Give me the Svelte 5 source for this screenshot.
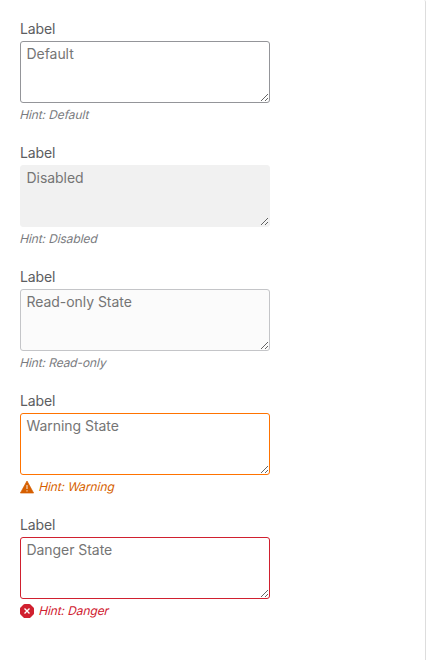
<script>
  const fields = [
    { kind: 'default', text: 'Default', hint: 'Default' },
    { kind: 'disabled', text: 'Disabled', hint: 'Disabled' },
    { kind: 'readonly', text: 'Read-only State', hint: 'Read-only' },
    { kind: 'warning', text: 'Warning State', hint: 'Warning' },
    { kind: 'danger', text: 'Danger State', hint: 'Danger' }
  ];
</script>

<main>
  {#each fields as f}
    <div class="field {f.kind}">
      <label for={f.kind}>Label</label>
      <textarea id={f.kind} placeholder={f.text} disabled={f.kind === 'disabled'} readonly={f.kind === 'readonly'}></textarea>
      <div class="hint">
        {#if f.kind === 'warning'}
          <svg width="14" height="14" viewBox="0 0 14 14"><path d="M7 1 13.6 13H.4Z" fill="currentColor" stroke="currentColor" stroke-width=".7" stroke-linejoin="round"/><path d="M7 5v4.1M7 10.2v1.3" stroke="#fff" stroke-opacity=".8" stroke-width="1.1"/></svg>
        {:else if f.kind === 'danger'}
          <svg width="14" height="14" viewBox="0 0 14 14"><path d="M4.7 0h4.6Q10 0 10.5.5l3 3q.5.5.5 1.2v4.6q0 .7-.5 1.2l-3 3q-.5.5-1.2.5H4.7q-.7 0-1.2-.5l-3-3Q0 10 0 9.3V4.7Q0 4 .5 3.5l3-3Q4 0 4.7 0Z" fill="currentColor"/><path d="m4.5 4.5 5 5M9.5 4.5l-5 5" stroke="#fff" stroke-width="1.4"/></svg>
        {/if}
        <span>Hint: {f.hint}</span>
      </div>
    </div>
  {/each}
</main>

<style>
  main {
    box-sizing: border-box;
    height: 660px;
    padding: 17px 20px 0;
    border-right: 1px solid #ddd;
    border-top-right-radius: 2px;
    background: #fff;
    font-family: Inter, sans-serif;
  }
  .field { height: 124px; width: 250px; }
  label { display: block; height: 24px; line-height: 24px; font-size: 14px; letter-spacing: -0.1px; color: #5c5d61; }
  textarea {
    display: block;
    box-sizing: border-box;
    width: 250px;
    height: 62px;
    margin: 0;
    padding: 0 5.5px;
    border: 1px solid #949599;
    border-radius: 3px;
    background: #fff;
    font: 14px/24px Inter, sans-serif;
    letter-spacing: -0.05px;
    outline: none;
  }
  textarea::placeholder { color: #757575; opacity: 1; }
  .disabled textarea { background: #f1f1f1; border-color: #f1f1f1; }
  .readonly textarea { background: #fbfbfb; border-color: #c4c5c8; }
  .warning textarea { border-color: #ff7300; }
  .danger textarea { border-color: #d0202f; }
  .hint { display: flex; align-items: center; gap: 5px; height: 24px; font-size: 12px; font-style: italic; color: #7a7b80; }
  .hint svg { flex: none; }
  .hint span {
    display: inline-block;
    font-style: normal;
    letter-spacing: -0.1px;
    transform: translate(0.3px, -1px) skewX(-14deg);
  }
  .warning .hint { color: #d65f00; }
  .danger .hint { color: #d0202f; }
</style>
